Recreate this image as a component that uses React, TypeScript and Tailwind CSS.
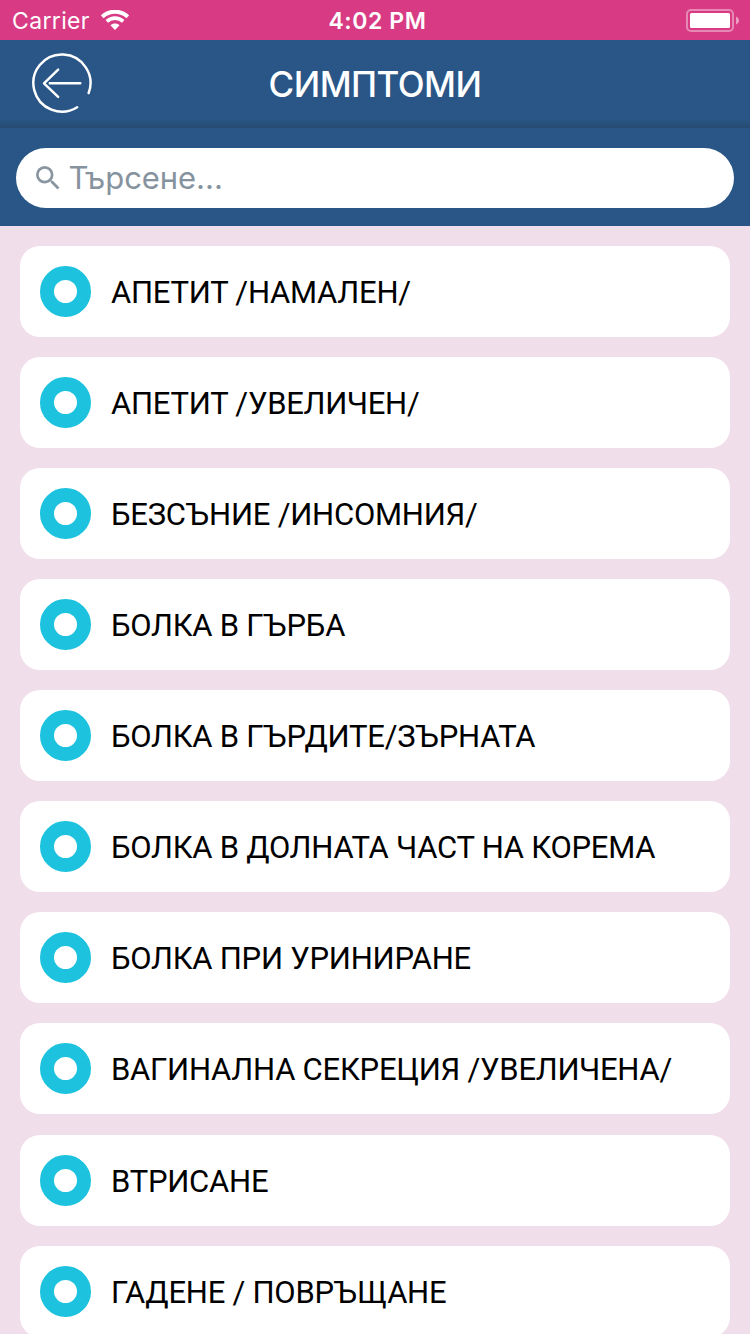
const symptoms = [
  { label: "АПЕТИТ /НАМАЛЕН/" },
  { label: "АПЕТИТ /УВЕЛИЧЕН/" },
  { label: "БЕЗСЪНИЕ /ИНСОМНИЯ/" },
  { label: "БОЛКА В ГЪРБА" },
  { label: "БОЛКА В ГЪРДИТЕ/ЗЪРНАТА" },
  { label: "БОЛКА В ДОЛНАТА ЧАСТ НА КОРЕМА" },
  { label: "БОЛКА ПРИ УРИНИРАНЕ" },
  { label: "ВАГИНАЛНА СЕКРЕЦИЯ /УВЕЛИЧЕНА/" },
  { label: "ВТРИСАНЕ" },
  { label: "ГАДЕНЕ / ПОВРЪЩАНЕ" },
];

function StatusBar() {
  return (
    <div className="grid h-10 shrink-0 grid-cols-3 items-center bg-[#d83b84] pr-[11px] pl-3 font-['Inter',sans-serif] text-white">
      <div className="flex items-center gap-[11px]">
        <span className="pt-0.5 text-[23px] leading-[38px] tracking-[0.35px]">Carrier</span>
        <svg width="28" height="20" viewBox="0 0 28 20" fill="none" stroke="white">
          <path d="M1.2 6.8C8.3 0 19.7 0 26.8 6.8" strokeWidth="4" />
          <path d="M5.8 11.4C10.4 7 17.6 7 22.2 11.4" strokeWidth="3.6" />
          <path d="M9.4 15.2C12 12.8 16 12.8 18.6 15.2L14 20Z" fill="white" stroke="none" />
        </svg>
      </div>
      <span className="pt-0.5 pl-1 text-center text-[23px] leading-[38px] font-semibold tracking-[0.6px] whitespace-nowrap">4:02 PM</span>
      <svg className="justify-self-end" width="53" height="26" viewBox="0 -2 53 26">
        <rect x="1" y="1" width="46" height="21" rx="4" fill="none" stroke="white" strokeOpacity="0.4" strokeWidth="2" />
        <rect x="4" y="4" width="40" height="15" rx="1.5" fill="white" />
        <path d="M50 7.5C54 9 54 14 50 15.5Z" fill="white" fillOpacity="0.5" />
      </svg>
    </div>
  );
}

function Header() {
  return (
    <header className="grid h-[88px] shrink-0 grid-cols-[92px_1fr_92px] items-center bg-linear-to-b from-[#295686] from-90% to-[#264b72]">
      <button aria-label="Назад" className="flex h-[86px] items-center pl-[31px]">
        <svg width="62" height="62" viewBox="-0.6 -0.2 62 62" fill="none" stroke="white" strokeWidth="2.5" strokeLinecap="round" strokeLinejoin="round">
          <path d="M46.3 54.4A29 29 0 1 1 58 40" />
          <path d="M27 16.2L12.6 30.1L27 44M18.5 30H49.5" />
        </svg>
      </button>
      <h1 className="text-center font-['Inter',sans-serif] text-[35px] leading-[86px] font-medium tracking-[-0.55px] text-white">СИМПТОМИ</h1>
    </header>
  );
}

function SearchBar() {
  return (
    <div className="flex h-[98px] shrink-0 bg-[#295686] px-4 pt-5">
      <label className="flex h-[60px] w-full items-center rounded-full bg-white pl-5">
        <svg width="23.5" height="23.5" viewBox="3 3 17.49 17.49" fill="#8996a1">
          <path d="M15.5 14h-.79l-.28-.27A6.47 6.47 0 0 0 16 9.5 6.5 6.5 0 1 0 9.5 16c1.61 0 3.09-.59 4.23-1.57l.27.28v.79l5 4.99L20.49 19l-4.99-5zm-6 0a4.5 4.5 0 1 1 0-9 4.5 4.5 0 0 1 0 9z" />
        </svg>
        <input
          placeholder="Търсене..."
          className="ml-[9px] h-[60px] w-[600px] bg-transparent pb-0.5 font-['Inter',sans-serif] text-[31px] tracking-[-0.05px] text-black outline-none placeholder:text-[#86939e]"
        />
      </label>
    </div>
  );
}

export default function App() {
  return (
    <div className="flex h-[1334px] w-[750px] flex-col overflow-hidden bg-[#f0dfea]">
      <StatusBar />
      <Header />
      <SearchBar />
      <ul className="flex flex-col gap-[20.07px] px-5 pt-5">
        {symptoms.map(({ label }) => (
          <li key={label} className="flex h-[91px] shrink-0 items-center gap-5 rounded-[20px] bg-white px-5">
            <span className="size-[51px] shrink-0 rounded-full border-14 border-[#1dc3de]" />
            <span className="pt-0.5 font-['Roboto',sans-serif] text-[31px] leading-[49px] tracking-[-0.24px] whitespace-nowrap text-black">{label}</span>
          </li>
        ))}
      </ul>
    </div>
  );
}
